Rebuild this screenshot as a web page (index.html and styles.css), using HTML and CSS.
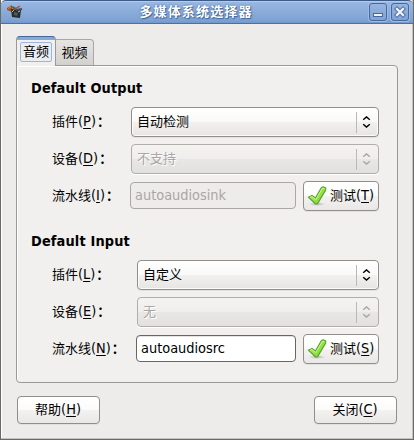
FILE: index.html
```html
<!DOCTYPE html>
<html lang="zh-CN">
<head>
<meta charset="utf-8">
<title>多媒体系统选择器</title>
<link rel="stylesheet" href="styles.css">
</head>
<body>
<svg class="defs" aria-hidden="true">
  <defs>
    <linearGradient id="green" x1="0" y1="0" x2="1" y2="1"><stop offset="0" stop-color="#b5f36a"/><stop offset="1" stop-color="#75d52d"/></linearGradient>
    <radialGradient id="shade"><stop offset="0" stop-color="#000" stop-opacity=".25"/><stop offset="1" stop-color="#000" stop-opacity="0"/></radialGradient>
  </defs>
  <symbol id="check" viewBox="0 0 20 20">
    <ellipse cx="10" cy="18" rx="8.5" ry="2" fill="url(#shade)"/>
    <path d="M1.3 11.2 5 9.4 8.4 11.9 14.4 1.4 16.2.8 18.8 2 18.6 4.1 10.6 17.6 8.7 18Z" fill="url(#green)" stroke="#5aa12b" stroke-width="1.1" stroke-linejoin="round"/>
    <path d="M3 11.4 4.8 10.6 8.8 13.6 15.4 2.3 17.3 2.7" fill="none" stroke="#d2fa9c" stroke-width=".8"/>
  </symbol>
  <symbol id="arrows" viewBox="0 0 9 12">
    <path d="M1.2 3.8 4.5.9 7.8 3.8M1.2 8.2 4.5 11.1 7.8 8.2" fill="none" stroke="currentColor" stroke-width="1.4"/>
  </symbol>
</svg>
<div class="window">
  <header class="titlebar">
    <svg class="app-icon" viewBox="0 0 16 14">
      <path d="M0 3 5 0 5 7 0 5Z" fill="#a7521c"/><path d="M1 3.5 4 2" stroke="#d98645"/>
      <path d="M4 4 14 5 13 13 5 12Z" fill="#292c2d"/>
      <path d="M5 2 9 4" stroke="#416c48" stroke-width="2"/><path d="M8 4 13 1" stroke="#c93639" stroke-width="1.4"/>
      <path d="M9 5 15 4" stroke="#2d5963" stroke-width="2"/><path d="M7 7 11 8 10 11 7 10Z" fill="#555b58"/>
      <path d="M5 7 7 5M11 7 13 6" stroke="#c6b98b"/>
    </svg>
    <h1>多媒体系统选择器</h1>
    <div class="controls">
      <span class="control"><svg viewBox="0 0 18 18"><rect x="4.5" y="10.5" width="9" height="3" fill="#eef3fa" stroke="#48689b"/></svg></span>
      <span class="control"><svg viewBox="0 0 18 18"><path d="M6 6 12 12M12 6 6 12" stroke="#48689b" stroke-width="4.2" stroke-linecap="square"/><path d="M6 6 12 12M12 6 6 12" stroke="#eef3fa" stroke-width="2.4" stroke-linecap="square"/></svg></span>
    </div>
  </header>
  <main>
    <nav class="tabs"><div class="tab active"><span>音频</span></div><div class="tab">视频</div></nav>
    <div class="panel">
      <section>
        <h2>Default Output</h2>
        <div class="row"><label>插件<span class="key">(<u>P</u>)</span><b>：</b></label><div class="combo"><span>自动检测</span><svg><use href="#arrows"/></svg></div></div>
        <div class="row"><label>设备<span class="key">(<u>D</u>)</span><b>：</b></label><div class="combo disabled"><span>不支持</span><svg><use href="#arrows"/></svg></div></div>
        <div class="row"><label>流水线<span class="key">(<u>I</u>)</span><b>：</b></label><div class="entry disabled">autoaudiosink</div><div class="button test"><svg><use href="#check"/></svg><span>测试<span class="key">(<u>T</u>)</span></span></div></div>
      </section>
      <section class="input">
        <h2>Default Input</h2>
        <div class="row"><label>插件<span class="key">(<u>L</u>)</span><b>：</b></label><div class="combo"><span>自定义</span><svg><use href="#arrows"/></svg></div></div>
        <div class="row"><label>设备<span class="key">(<u>E</u>)</span><b>：</b></label><div class="combo disabled"><span>无</span><svg><use href="#arrows"/></svg></div></div>
        <div class="row"><label>流水线<span class="key">(<u>N</u>)</span><b>：</b></label><div class="entry">autoaudiosrc</div><div class="button test"><svg><use href="#check"/></svg><span>测试<span class="key">(<u>S</u>)</span></span></div></div>
      </section>
    </div>
    <footer><div class="button"><span>帮助<span class="key">(<u>H</u>)</span></span></div><div class="button"><span>关闭<span class="key">(<u>C</u>)</span></span></div></footer>
  </main>
</div>
</body>
</html>
```
FILE: styles.css
```css
* { box-sizing: border-box; }
body { margin: 0; font: 13px/18px "DejaVu Sans Condensed", "Noto Sans CJK SC", sans-serif; color: #000; background: #6b6762; overflow: hidden; }
h1, h2 { margin: 0; }
u { text-underline-offset: 2px; text-decoration-thickness: 1px; text-decoration-skip-ink: none; }
.key { font-size: 14.4px; line-height: 1; }
.defs { position: absolute; width: 0; height: 0; }
.window { width: 414px; height: 440px; display: flex; flex-direction: column; background: #edeceb; border: solid #6b6966; border-width: 0 1px 1px; box-shadow: inset -1px -1px #c5c3c0, inset 1px 0 #fff; }
.titlebar { height: 24px; flex: none; display: flex; align-items: center; padding: 0 4px 0 6px; background: linear-gradient(#9ab8e2, #7fa3d4 85%, #7398cb); border-top: 1px solid #3e5a86; border-bottom: 1px solid #4b70a6; border-radius: 5px 5px 0 0; box-shadow: inset 0 1px #b5cbea; }
.app-icon { width: 16px; height: 14px; margin-right: 14px; }
.titlebar h1 { flex: 1; color: #fff; font-size: 13px; line-height: 18px; letter-spacing: 1.15px; font-weight: 700; text-align: center; padding-left: 2px; text-shadow: 0 0 2px #355b91, 1px 1px 1px #46699b; }
.controls { display: flex; gap: 4px; margin-left: 16px; }
.control { width: 18px; height: 18px; border: 1px solid #48689b; border-radius: 3px; background: linear-gradient(#96b5e0, #7fa3d5); box-shadow: 0 0 0 1px #9ebbe3; }
.control svg { display: block; width: 18px; height: 18px; margin: -1px; }
main { flex: 1; padding: 12px 15px 0; }
.tabs { display: flex; align-items: flex-end; height: 29px; }
.tab { width: 38px; height: 26px; padding-top: 4px; text-align: center; border: 1px solid #aaa8a5; border-left: 0; border-bottom: 0; border-radius: 0 4px 0 0; background: linear-gradient(#e6e5e3, #d3d1ce); }
.tab.active { width: 40px; height: 30px; margin-bottom: -1px; padding: 2px 2px 0; border: 1px solid #9b9996; border-top: 1px solid #46699b; border-bottom: 0; border-radius: 4px 4px 0 0; background: linear-gradient(#86a9da 0 3px, #f1f0ef 3px); position: relative; }
.active span { display: block; width: 32px; height: 20px; margin: 3px auto 0; line-height: 17px; border: 1px solid #9eb5d7; border-radius: 2px; background: #eaedf2; }
.panel { width: 382px; height: 318px; border: 1px solid #9b9996; border-radius: 0 4px 4px 4px; background: #f1f0ef; box-shadow: inset 1px 1px #fff; padding: 13px 18px 0 14px; }
section { height: 153px; }
h2 { height: 18px; font-size: 14.4px; line-height: 18px; font-weight: 700; letter-spacing: .15px; margin-bottom: 10px; }
.row { display: flex; height: 30px; margin: 0 0 7px 21px; align-items: center; }
.row label { width: 79px; flex: none; white-space: nowrap; }
label b { margin-left: 1px; }
.input label { width: 85px; }
.combo { flex: 1; height: 30px; padding: 0 7px 0 5px; display: flex; align-items: center; border: 1px solid #918e8a; border-radius: 4px; background: linear-gradient(#fff, #f9f9f8 50%, #f2f1f0 50%, #e7e5e4); box-shadow: inset 0 0 0 1px #fffc, 0 1px #e3e1df; }
.combo span { flex: 1; }
.combo svg { width: 15px; height: 21px; padding: 4px 0 5px 5px; border-left: 1px solid #bbb8b5; }
.combo.disabled { border-color: #b1aeaa; color: #aaa6a2; background: linear-gradient(#f4f3f2, #efeeed 50%, #e9e7e6 50%, #e3e1df); box-shadow: 0 1px #fff; text-shadow: 1px 1px #fff; }
.entry { width: 167px; height: 27px; margin: 0 7px 1px -1px; padding: 0 4px; font-size: 14.4px; line-height: 25px; border: 1px solid #696662; border-radius: 4px; background: #fff; box-shadow: inset 0 1px #e5e4e3; }
.input .entry { width: 161px; }
.entry.disabled { color: #aaa6a2; border-color: #aaa7a4; background: #edeceb; box-shadow: none; }
.button { width: 84px; height: 28px; display: flex; align-items: center; justify-content: center; border: 1px solid #918e8a; border-radius: 4px; background: linear-gradient(#fff, #fbfbfa 50%, #f3f2f1 50%, #e9e8e7); box-shadow: 0 1px #e3e1df; }
.test { width: 76px; height: 30px; justify-content: flex-start; padding-left: 3px; gap: 3px; flex: none; white-space: nowrap; }
.test svg { width: 20px; height: 20px; flex: none; }
footer { display: flex; justify-content: space-between; width: 380px; margin: 13px 0 0 1px; }
footer .button { width: 83px; padding-right: 1px; }
```
